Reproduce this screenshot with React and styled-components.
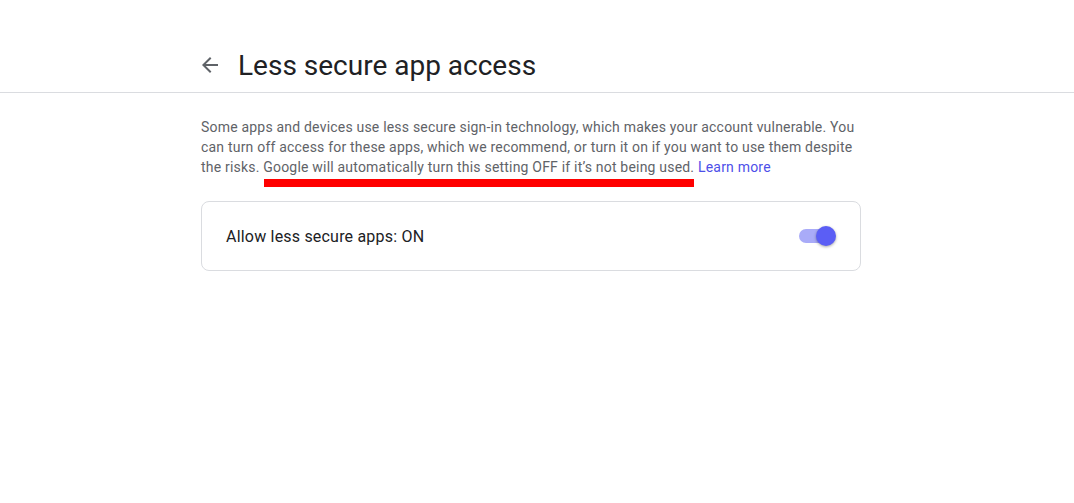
import React, { useState } from 'react';
import styled, { createGlobalStyle } from 'styled-components';

const GlobalStyle = createGlobalStyle`
  body {
    margin: 0;
    background: #fff;
    font-family: Roboto, 'Liberation Sans', Arial, sans-serif;
  }
`;

const App = () => {
  const [allowed, setAllowed] = useState(true);

  return (
    <>
      <GlobalStyle />
      <Header>
        <HeaderInner>
          <BackButton aria-label="Back">
            <svg width="24" height="24" viewBox="0 0 24 24">
              <path
                fill="#5f6368"
                d="M20 11H7.83l5.59-5.59L12 4l-8 8 8 8 1.41-1.41L7.83 13H20v-2z"
              />
            </svg>
          </BackButton>
          <Title>Less secure app access</Title>
        </HeaderInner>
      </Header>
      <Main>
        <Description>
          Some apps and devices use less secure sign-in technology, which makes
          your account vulnerable. You can turn off access for these apps, which
          we recommend, or turn it on if you want to use them despite the risks.{' '}
          <Marked>Google will automatically turn this setting OFF if it’s not being used.</Marked>{' '}
          <LearnMore href="#">Learn more</LearnMore>
        </Description>
        <SettingCard>
          <SettingLabel>Allow less secure apps: {allowed ? 'ON' : 'OFF'}</SettingLabel>
          <Switch
            role="switch"
            aria-checked={allowed}
            onClick={() => setAllowed(v => !v)}
          >
            <Track $on={allowed} />
            <Thumb $on={allowed} />
          </Switch>
        </SettingCard>
      </Main>
    </>
  );
};
export default App;

const Header = styled.header`
  border-bottom: 1px solid #dadce0;
  padding: 45px 0 7px;
`;

const HeaderInner = styled.div`
  width: 672px;
  margin: 0 auto;
  display: flex;
  align-items: center;
  height: 40px;
`;

const BackButton = styled.button`
  display: flex;
  align-items: center;
  justify-content: center;
  width: 40px;
  height: 40px;
  margin-left: -11px;
  margin-right: 8px;
  padding: 0;
  border: none;
  border-radius: 50%;
  background: transparent;
  cursor: pointer;
`;

const Title = styled.h1`
  margin: 0;
  font-size: 28px;
  font-weight: 400;
  color: #202124;
  letter-spacing: 0;
`;

const Main = styled.main`
  width: 672px;
  margin: 0 auto;
  padding-top: 24px;
`;

const Description = styled.p`
  width: 660px;
  margin: 0;
  font-size: 14px;
  line-height: 20px;
  letter-spacing: 0.2px;
  color: #5f6368;
`;

const Marked = styled.span`
  position: relative;
  &::after {
    content: '';
    position: absolute;
    left: 1px;
    right: 0;
    top: 20px;
    height: 8px;
    background: #ff0000;
  }
`;

const LearnMore = styled.a`
  color: #4d4fe9;
  text-decoration: none;
`;

const SettingCard = styled.div`
  width: 660px;
  box-sizing: border-box;
  height: 70px;
  margin-top: 24px;
  padding: 0 24px;
  border: 1px solid #dadce0;
  border-radius: 8px;
  display: flex;
  align-items: center;
  justify-content: space-between;
`;

const SettingLabel = styled.div`
  font-size: 16px;
  letter-spacing: 0.2px;
  color: #202124;
`;

const Switch = styled.div`
  position: relative;
  width: 37px;
  height: 20px;
  cursor: pointer;
`;

const Track = styled.div`
  position: absolute;
  left: 0;
  top: 3px;
  width: 36px;
  height: 14px;
  border-radius: 7px;
  background: ${({ $on }) => ($on ? '#a9abf8' : '#bdc1c6')};
`;

const Thumb = styled.div`
  position: absolute;
  top: 0;
  left: ${({ $on }) => ($on ? '17px' : '0')};
  width: 20px;
  height: 20px;
  border-radius: 50%;
  background: ${({ $on }) => ($on ? '#5b5ef5' : '#fff')};
  box-shadow: 0 1px 3px rgba(0, 0, 0, 0.35);
`;
